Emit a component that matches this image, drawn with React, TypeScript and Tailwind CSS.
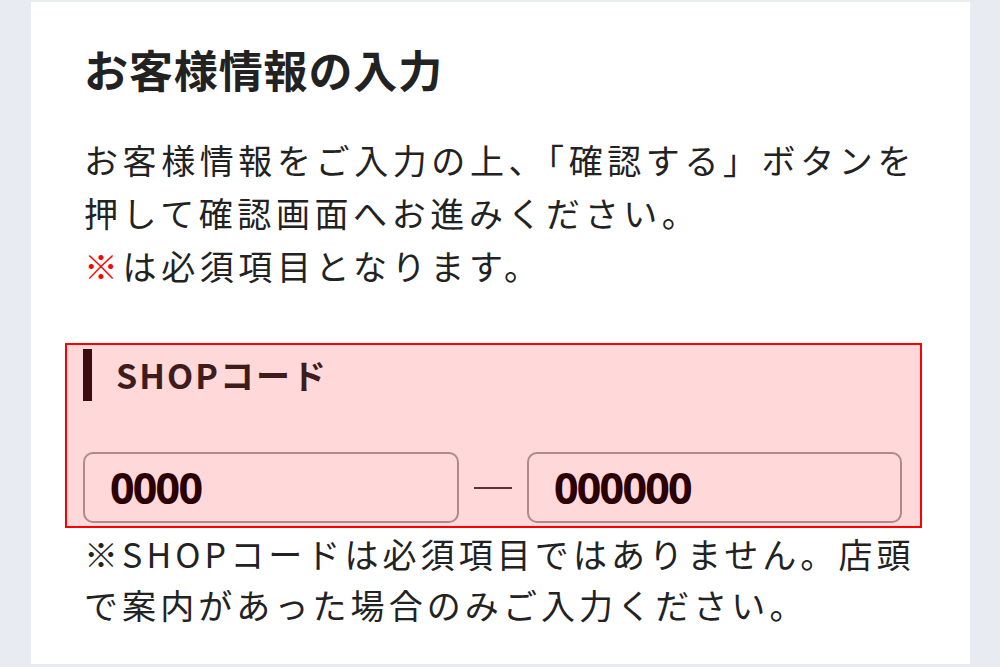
const JP = "font-['Noto_Sans_CJK_JP','Noto_Sans',sans-serif]";

function ShopCodeField({ value, width }: { value: string; width: string }) {
  return (
    <div
      className={`${width} flex h-[71px] items-center rounded-[10px] border-2 border-[#ae8a8a] pl-[25px]`}
    >
      <span className="font-['Noto_Sans','Noto_Sans_CJK_JP',sans-serif] text-[43px] leading-none font-bold tracking-[-1.8px] text-[#2a0004]">
        {value}
      </span>
    </div>
  );
}

export default function App() {
  return (
    <div className={`${JP} min-h-[667px] bg-[#e8ecf2] px-[31px] pt-[2px]`}>
      <div className="h-[662px] w-[939px] bg-white pt-[34px]">
        <h1 className="pl-[53px] text-[44px] leading-[66px] font-bold tracking-[0.02em] text-[#222]">
          お客様情報の入力
        </h1>

        <p className="mt-[31px] pl-[53px] text-[34px] leading-[53px] tracking-[0.135em] text-[#222]">
          お客様情報をご入力の上、「確認する」ボタンを
          <br />
          押して確認画面へお進みください。
          <br />
          <span className="text-[#ff0000]">※</span>は必須項目となります。
        </p>

        <section className="mt-[51px] ml-[34px] w-[857px] border-2 border-[#ff0000] bg-[#ffd8da] pt-[4px] pr-[18px] pb-[3px] pl-[16px]">
          <div className="flex h-[52px] items-center gap-[24px]">
            <div className="h-[52px] w-[9px] bg-[#3a0c0c]" />
            <h2 className="text-[34px] leading-none font-bold tracking-[0.06em] text-[#3f1c1c]">
              SHOPコード
            </h2>
          </div>

          <div className="mt-[51px] flex items-center">
            <ShopCodeField value="0000" width="w-[376px]" />
            <div className="flex w-[68px] justify-center">
              <div className="h-[2px] w-[38px] bg-[#5a3535]" />
            </div>
            <ShopCodeField value="000000" width="w-[375px]" />
          </div>
        </section>

        <p className="pl-[53px] text-[34px] leading-[51px] tracking-[0.12em] text-[#222]">
          ※SHOPコードは必須項目ではありません。店頭
          <br />
          で案内があった場合のみご入力ください。
        </p>
      </div>
    </div>
  );
}
